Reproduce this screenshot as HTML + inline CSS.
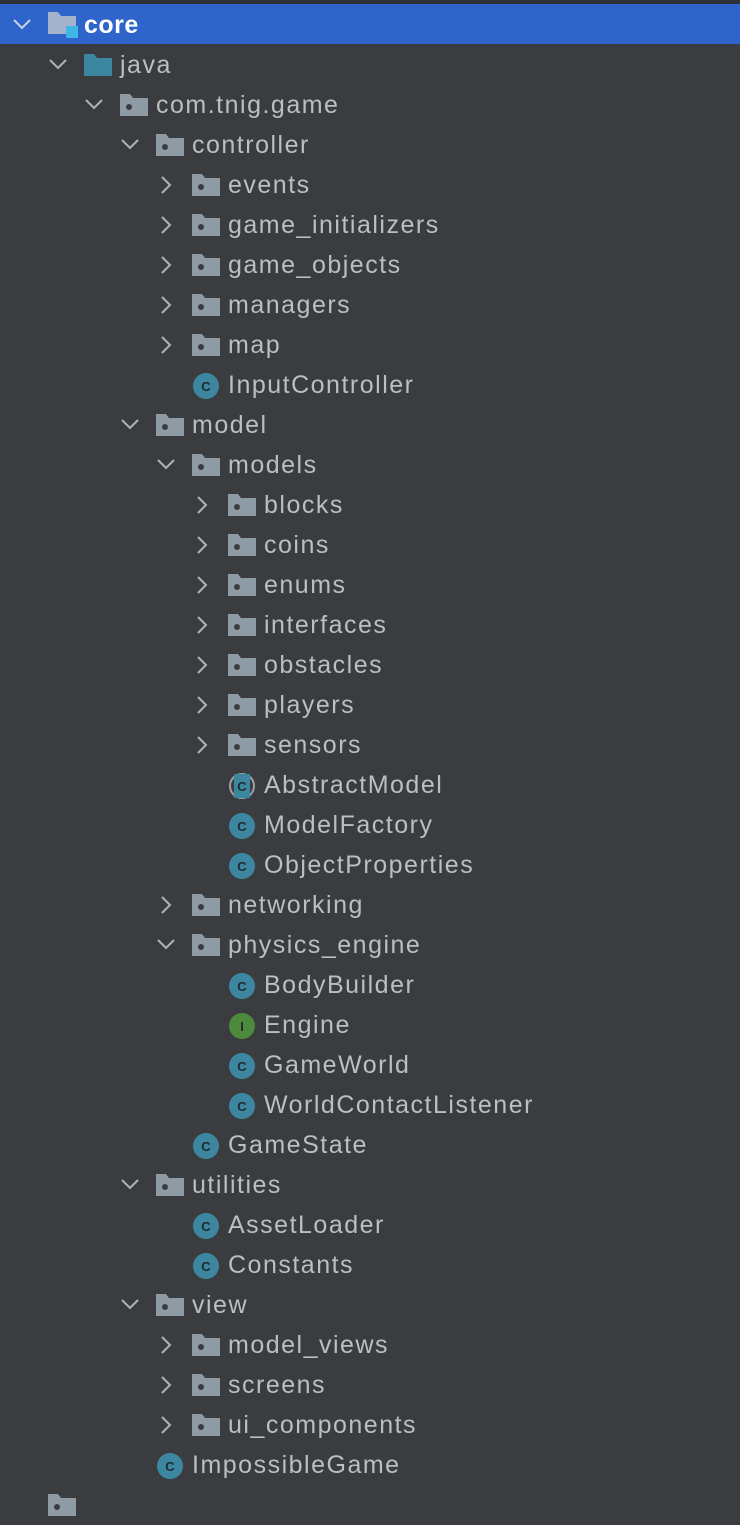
<!DOCTYPE html>
<html><head><meta charset="utf-8"><style>
body{margin:0;width:740px;height:1494px;background:#3a3c40;overflow:hidden;position:relative;font-family:"Liberation Sans",sans-serif}
.top{position:absolute;left:0;top:0;width:740px;height:4px;background:#2f3134}
.sel{position:absolute;left:0;top:4px;width:740px;height:40px;background:#2f65ca}
.r{position:absolute;height:40px;left:0;width:740px}
.t{position:absolute;top:6px;font-size:25px;color:#bcbec1;letter-spacing:1.5px;white-space:nowrap;line-height:29px}
svg{position:absolute}
</style></head><body>
<div class="top"></div><div class="sel"></div>
<div id="tree"></div>
<script>
const rows=[
[0,'mod','o','core'],[1,'src','o','java'],[2,'pkg','o','com.tnig.game'],[3,'pkg','o','controller'],
[4,'pkg','c','events'],[4,'pkg','c','game_initializers'],[4,'pkg','c','game_objects'],[4,'pkg','c','managers'],[4,'pkg','c','map'],
[4,'cls','','InputController'],[3,'pkg','o','model'],[4,'pkg','o','models'],
[5,'pkg','c','blocks'],[5,'pkg','c','coins'],[5,'pkg','c','enums'],[5,'pkg','c','interfaces'],[5,'pkg','c','obstacles'],[5,'pkg','c','players'],[5,'pkg','c','sensors'],
[5,'abs','','AbstractModel'],[5,'cls','','ModelFactory'],[5,'cls','','ObjectProperties'],
[4,'pkg','c','networking'],[4,'pkg','o','physics_engine'],
[5,'cls','','BodyBuilder'],[5,'int','','Engine'],[5,'cls','','GameWorld'],[5,'cls','','WorldContactListener'],
[4,'cls','','GameState'],[3,'pkg','o','utilities'],[4,'cls','','AssetLoader'],[4,'cls','','Constants'],
[3,'pkg','o','view'],[4,'pkg','c','model_views'],[4,'pkg','c','screens'],[4,'pkg','c','ui_components'],[3,'cls','','ImpossibleGame'],
[0,'pkgx','','']];
let h='';
rows.forEach((r,i)=>{
 const [L,ty,st,tx]=r, top=5+40*i, cx=22+36*L, ix=48+36*L, tl=84+36*L;
 let s='<div class="r" style="top:'+top+'px">';
 const chc=i==0?'#c9d3e6':'#b0b2b6';
 if(st=='o')s+='<svg style="left:'+(cx-10)+'px;top:9px" width="20" height="20"><path d="M2 6 L10 14 L18 6" fill="none" stroke="'+chc+'" stroke-width="2"/></svg>';
 if(st=='c')s+='<svg style="left:'+(cx-10)+'px;top:10px" width="20" height="20"><path d="M6 2 L14 10 L6 18" fill="none" stroke="#b0b2b6" stroke-width="2"/></svg>';
 if(ty=='pkg'||ty=='pkgx')s+='<svg style="left:'+ix+'px;top:9px" width="30" height="24"><path d="M0 0 H10 L13 4 H28 V22 H0 Z" fill="#8f9ba4"/><circle cx="9" cy="13" r="3" fill="#3a3c40"/></svg>';
 if(ty=='src')s+='<svg style="left:'+ix+'px;top:9px" width="30" height="24"><path d="M0 0 H10 L13 4 H28 V22 H0 Z" fill="#3d86a0"/></svg>';
 if(ty=='mod')s+='<svg style="left:'+ix+'px;top:7px" width="32" height="30"><path d="M0 0 H10 L13 4 H28 V22 H0 Z" fill="#a4b3cb"/><rect x="18" y="14" width="12" height="12" fill="#3fb7e4"/></svg>';
 if(ty=='cls'||ty=='int'||ty=='abs'){
  const col=ty=='int'?'#4d8a3b':'#3d86a0', letter=ty=='int'?'I':'C';
  s+='<svg style="left:'+ix+'px;top:7px" width="28" height="28">';
  if(ty=='abs')s+='<circle cx="14" cy="14" r="12" fill="none" stroke="#9aa0a6" stroke-width="2"/><rect x="6" y="2" width="16" height="24" fill="#3d86a0"/>';
  else s+='<circle cx="14" cy="14" r="13" fill="'+col+'"/>';
  s+='<text x="14" y="19" text-anchor="middle" font-family="Liberation Sans,sans-serif" font-weight="bold" font-size="13" fill="#1f2a30">'+letter+'</text></svg>';
 }
 if(tx)s+='<div class="t" style="left:'+tl+'px;'+(i==0?'color:#fff;font-weight:bold;letter-spacing:0.5px;':'')+'">'+tx+'</div>';
 h+=s+'</div>';
});
document.getElementById('tree').innerHTML=h;
</script>
</body></html>
